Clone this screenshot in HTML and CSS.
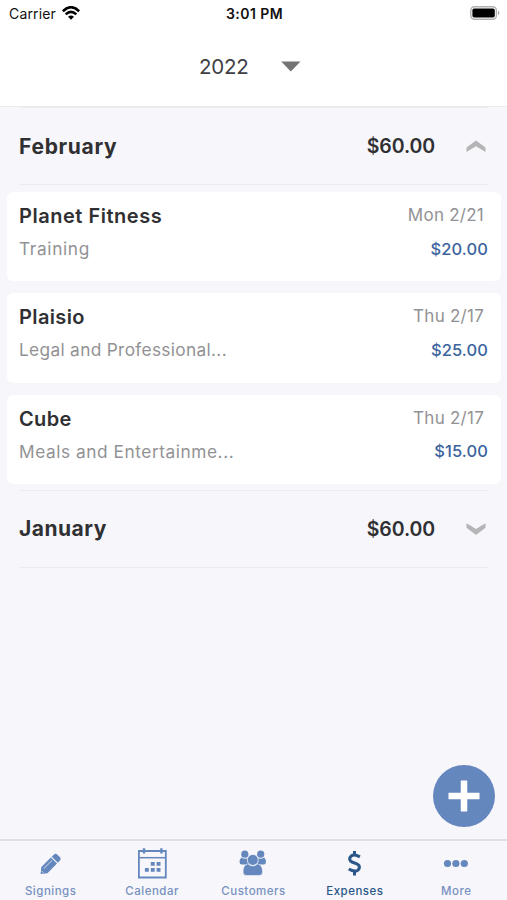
FILE: index.html
```html
<!DOCTYPE html>
<html lang="en">
<head>
<meta charset="utf-8">
<title>Expenses</title>
<link rel="stylesheet" href="styles.css">
</head>
<body>
<div class="app">
  <div class="status">
    <div class="carrier"><span>Carrier</span>
      <svg width="18" height="14" viewBox="0 0 18 14"><g fill="none" stroke="#000" stroke-width="2.6"><path d="M.8 5.2Q9-2.7 17.2 5.2"/><path d="M3.7 8.4Q9 3.4 14.3 8.4"/></g><path d="M6 10.8Q9 8.2 12 10.8L9 13.7Z"/></svg>
    </div>
    <div class="time">3:01 PM</div>
    <svg class="battery" width="30" height="14" viewBox="0 0 30 14"><rect x=".8" y=".8" width="25.6" height="12.4" rx="3.6" fill="#fff" stroke="#b0b0b0" stroke-width="1.4"/><rect x="2.4" y="2.4" width="22.400" height="9.2" rx="1.8"/><path d="M28 4.800q3 2.200 0 4.400z" fill="#aaa"/></svg>
  </div>
  <header class="year"><span class="year-label">2022</span><svg width="20" height="11" viewBox="0 0 20 11"><path d="M.2.5h19.300L9.800 10.500z" fill="#747474"/></svg></header>
  <main class="content">
    <section class="month">
      <h2 class="month-name feb">February</h2><span class="total">$60.00</span>
      <svg width="20" height="12" viewBox="0 0 20 12"><path d="M.5 7.600 10 .4l9.500 7.200v4.400L10 6.200.500 12z" fill="#b5b5b7"/></svg>
    </section>
    <div class="cards">
      <article class="card">
        <div class="line"><h3 class="name fitness">Planet Fitness</h3><span class="date mon">Mon 2/21</span></div>
        <div class="line"><span class="kind training">Training</span><span class="amount">$20.00</span></div>
      </article>
      <article class="card">
        <div class="line"><h3 class="name plaisio">Plaisio</h3><span class="date">Thu 2/17</span></div>
        <div class="line"><span class="kind legal">Legal and Professional...</span><span class="amount">$25.00</span></div>
      </article>
      <article class="card">
        <div class="line"><h3 class="name cube">Cube</h3><span class="date">Thu 2/17</span></div>
        <div class="line"><span class="kind meals">Meals and Entertainme...</span><span class="amount">$15.00</span></div>
      </article>
    </div>
    <section class="month closed">
      <h2 class="month-name jan">January</h2><span class="total">$60.00</span>
      <svg width="20" height="12" viewBox="0 0 20 12"><path d="M.5 4.700 10 12l9.500-7.300V.3L10 6.100.500.300z" fill="#b5b5b7"/></svg>
    </section>
    <button class="add" aria-label="Add expense"><svg width="32" height="32" viewBox="0 0 32 32"><path d="M16 .5v31M.5 16h31" stroke="#fff" stroke-width="6.500"/></svg></button>
  </main>
  <nav class="tabs">
    <a class="tab"><svg width="32" height="32" viewBox="0 0 32 32"><g transform="translate(5.300 27.200) rotate(-45)" fill="#6487be"><path d="M.4 0 5.800-4.300H19.300V4.300H5.800z"/><path d="M20.500-4.300h2.800q2.600 0 2.600 2.300V2q0 2.300-2.600 2.300h-2.800z"/><path d="M6.500-1.500H18" stroke="#b4c5e0" stroke-width="1"/><path d="M3.200-1v2" stroke="#f6f6fb" stroke-width=".9"/></g></svg><span>Signings</span></a>
    <a class="tab"><svg width="32" height="32" viewBox="0 0 32 32"><g fill="none" stroke="#6487be"><path d="M2.900 4h26.900v26.500H2.900z" stroke-width="1.800"/><path d="M3 10.700h26" stroke-width="1.500"/><path d="M8 1.300v5.300M25.400 1.300v5.300" stroke-width="2.400"/></g><path d="M14.800 15h3.900v3.800h-3.900zM20.600 15h3.900v3.800h-3.900zM8.900 21h3.900v3.800H8.900zM14.800 21h3.900v3.800h-3.900zM20.600 21h3.900v3.800h-3.900z" fill="#6487be"/></svg><span>Calendar</span></a>
    <a class="tab"><svg width="32" height="32" viewBox="0 0 32 32"><g fill="#6487be"><circle cx="7.800" cy="7.200" r="3.600"/><circle cx="23.700" cy="7.200" r="3.600"/><path d="M4.300 10.500q3.500 2.300 6.300.5l2 6.500H4.800q-2.200 0-2.200-2.300 0-3 1.700-4.700zM27.200 10.500q-3.500 2.300-6.300.5l-2 6.500h7.800q2.200 0 2.200-2.300 0-3-1.700-4.700z"/><path d="M10.800 16.800q5 4.400 10 0 4.800 1.300 4.800 8.200 0 3.500-3.500 3.500H9.500Q6 28.500 6 25q0-6.900 4.800-8.200z" stroke="#f6f6fb" stroke-width=".6"/><circle cx="15.800" cy="12.900" r="5.500" stroke="#f6f6fb" stroke-width=".8"/></g></svg><span>Customers</span></a>
    <a class="tab active"><svg width="32" height="32" viewBox="0 0 32 32"><g fill="none" stroke="#2b5689"><path d="M20.900 9.800Q15.500 6.800 12.300 8.900C9.600 10.900 10.500 14 13 15L17.800 16.900C21.500 18.500 20.800 22.400 18.300 23.600Q14.600 25 9.800 22" stroke-width="3.100"/><path d="M15.500 4V9M15.500 23.500v5" stroke-width="3"/></g></svg><span>Expenses</span></a>
    <a class="tab"><svg width="32" height="32" viewBox="0 0 32 32"><g fill="#6487be"><circle cx="7.500" cy="16.500" r="3.600"/><circle cx="15.900" cy="16.500" r="3.600"/><circle cx="24.300" cy="16.500" r="3.600"/></g></svg><span>More</span></a>
  </nav>
</div>
</body>
</html>
```
FILE: styles.css
```css
* { box-sizing: border-box; }
body { margin: 0; font-family: Inter, "Liberation Sans", sans-serif; color: #303033; background: #f6f6fb; }
h2, h3 { margin: 0; }
svg { display: block; flex: none; }
.app { height: 900px; display: flex; flex-direction: column; }
.status { height: 27px; background: #fff; color: #111; display: grid; grid-template-columns: 1fr auto 1fr; align-items: center; padding: 0 7px 0 9px; font-size: 14px; line-height: 27px; }
.carrier { display: flex; align-items: center; gap: 6px; letter-spacing: .15px; }
.carrier svg { margin-bottom: 1px; }
.time { font-weight: 600; font-size: 14px; letter-spacing: .450px; padding-top: 1px; line-height: 26px; }
.battery { justify-self: end; margin-bottom: 1px; }
.year { height: 80px; background: #fff; border-bottom: 1px solid #ebebee; display: flex; align-items: center; padding-left: 199px; color: #404044; }
.year-label { width: 82px; font-size: 20.5px; letter-spacing: -.2px; }
.year svg { margin-bottom: 1px; }
.content { flex: 1; position: relative; }
.month { height: 78px; margin: 0 19px; border-bottom: 1px solid #ebebf0; display: flex; align-items: center; padding-right: 2px; }
.month:first-child { border-top: 1px solid #ebebee; }
.month.closed { border-top: 1px solid #ebebf0; }
.month-name { flex: 1; font-size: 21px; font-weight: 700; }
.feb { letter-spacing: .700px; }
.jan { letter-spacing: .500px; }
.total { font-size: 19.500px; font-weight: 600; margin-right: 31px; letter-spacing: -.1px; }
.cards { padding: 7px 6px 6px 7px; display: grid; gap: 12px; }
.card { height: 89.300px; background: #fff; border-radius: 6px; padding: 7px 13px 0 12px; }
.line { height: 33px; display: flex; align-items: center; justify-content: space-between; }
.name { font-size: 20px; font-weight: 600; padding-top: 1px; }
.fitness { letter-spacing: .520px; }
.plaisio, .cube { letter-spacing: .380px; }
.kind { font-size: 17.300px; color: #929295; }
.training { letter-spacing: .650px; }
.legal { letter-spacing: .320px; }
.meals { letter-spacing: .550px; }
.date { font-size: 17px; color: #929295; margin-right: 4px; padding-bottom: 1px; letter-spacing: .250px; }
.amount { font-size: 16.500px; font-weight: 500; color: #3b639e; letter-spacing: .100px; }
.add { position: absolute; right: 12px; bottom: 12.500px; width: 62px; height: 62px; border: 0; border-radius: 50%; padding: 0; background: #6487be; display: grid; place-items: center; }
.tabs { height: 61px; border-top: 2px solid #dfdfe5; display: grid; grid-template-columns: repeat(5, 1fr); }
.tab { display: flex; flex-direction: column; align-items: center; padding-top: 6px; color: #7891c0; font-size: 11.500px; font-weight: 500; line-height: 14px; letter-spacing: .500px; }
.tab span { margin-top: 5px; }
.active { color: #2b5689; }
```
